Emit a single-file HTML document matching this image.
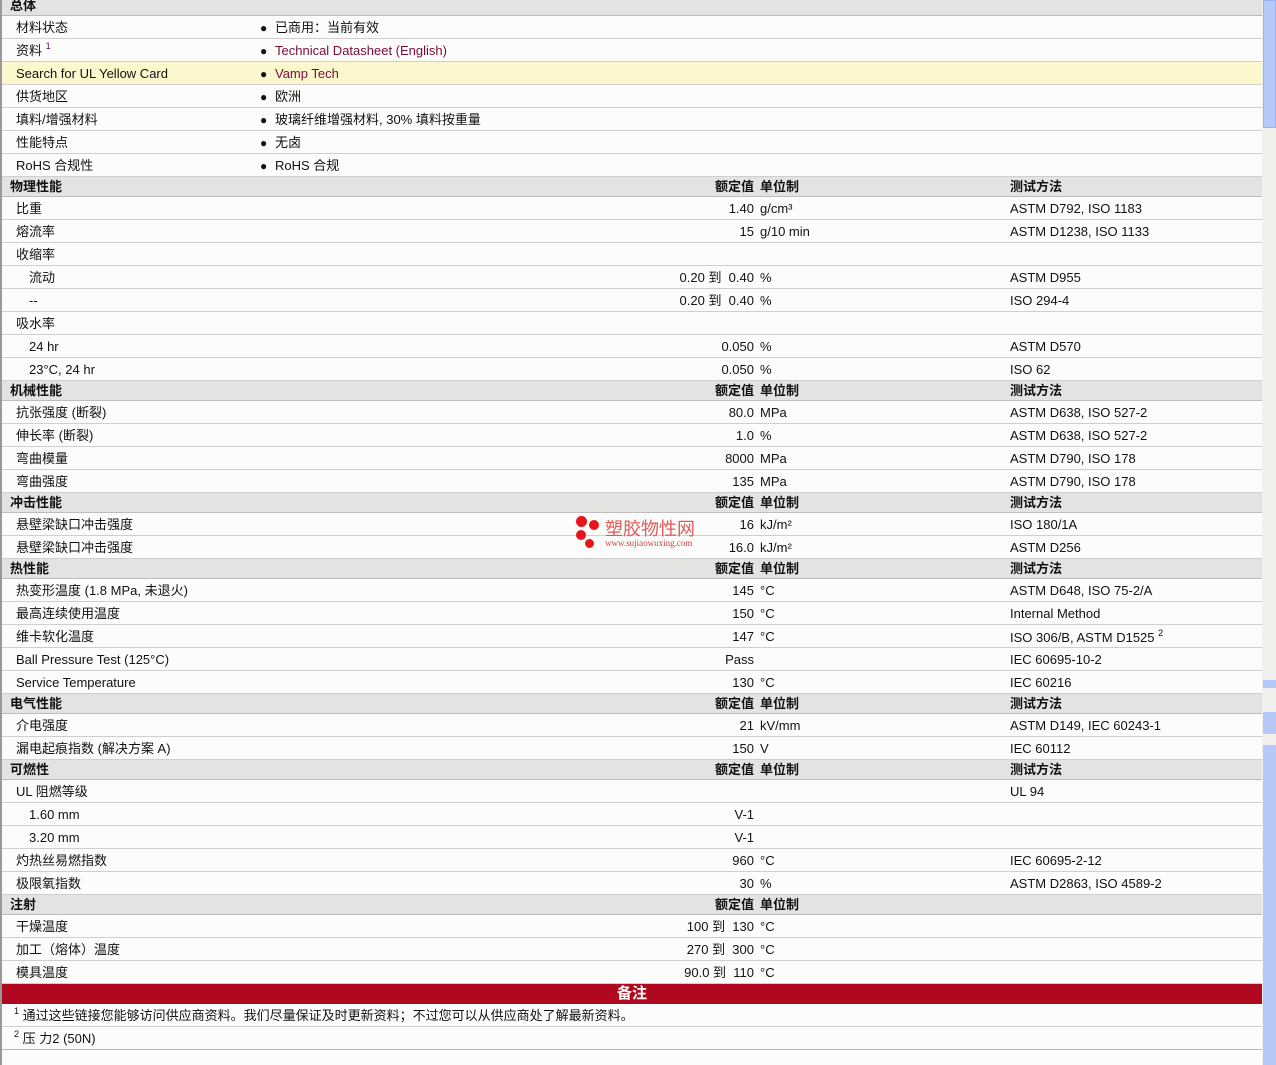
<!DOCTYPE html>
<html><head><meta charset="utf-8">
<style>
*{margin:0;padding:0;box-sizing:border-box}
body{width:1276px;height:1065px;overflow:hidden;background:#fcfdfa;font-family:"Liberation Sans","Noto Sans CJK SC",sans-serif;font-size:13px;color:#111;position:relative}
#wrap{position:absolute;left:0;top:0;width:1262px;border-left:2px solid #999;height:1065px}
.r{position:absolute;left:0;width:1260px;height:23px;border-bottom:1px solid #cfcfcf;line-height:24px}
.h{background:#e3e3e1;font-weight:bold;height:20px;line-height:20px;border-bottom:1px solid #bdbdbd}
.r span{position:absolute;top:0;white-space:nowrap}
.l{left:14px}.s{left:27px}
.b{left:258px;font-size:12px;font-weight:bold}
.v{left:273px}
.n{left:0;width:752px;text-align:right}
.u{left:758px}
.m{left:1008px}
.hl{left:8px}
.y{background:#fdf7cd}
a{color:#7a0a3a;text-decoration:none}
sup{font-size:9px;vertical-align:baseline;position:relative;top:-6px;line-height:0}
#sb{position:absolute;left:1262px;top:0;width:14px;height:1065px;background:#f1f0ec}
</style></head><body>
<div id="wrap">
<div class="r h" style="top:-4px"><span class="hl">总体</span></div>
<div class="r" style="top:16px"><span class="l">材料状态</span><span class="b">●</span><span class="v">已商用：当前有效</span></div>
<div class="r" style="top:39px"><span class="l">资料 <sup style="color:#5a0a70">1</sup></span><span class="b">●</span><span class="v"><a>Technical Datasheet (English)</a></span></div>
<div class="r y" style="top:62px"><span class="l">Search for UL Yellow Card</span><span class="b">●</span><span class="v"><a>Vamp Tech</a></span></div>
<div class="r" style="top:85px"><span class="l">供货地区</span><span class="b">●</span><span class="v">欧洲</span></div>
<div class="r" style="top:108px"><span class="l">填料/增强材料</span><span class="b">●</span><span class="v">玻璃纤维增强材料, 30% 填料按重量</span></div>
<div class="r" style="top:131px"><span class="l">性能特点</span><span class="b">●</span><span class="v">无卤</span></div>
<div class="r" style="top:154px"><span class="l">RoHS 合规性</span><span class="b">●</span><span class="v">RoHS 合规</span></div>

<div class="r h" style="top:177px"><span class="hl">物理性能</span><span class="n">额定值</span><span class="u">单位制</span><span class="m">测试方法</span></div>
<div class="r" style="top:197px"><span class="l">比重</span><span class="n">1.40</span><span class="u">g/cm³</span><span class="m">ASTM D792, ISO 1183</span></div>
<div class="r" style="top:220px"><span class="l">熔流率</span><span class="n">15</span><span class="u">g/10 min</span><span class="m">ASTM D1238, ISO 1133</span></div>
<div class="r" style="top:243px"><span class="l">收缩率</span></div>
<div class="r" style="top:266px"><span class="s">流动</span><span class="n">0.20&nbsp;到&nbsp;&nbsp;0.40</span><span class="u">%</span><span class="m">ASTM D955</span></div>
<div class="r" style="top:289px"><span class="s">--</span><span class="n">0.20&nbsp;到&nbsp;&nbsp;0.40</span><span class="u">%</span><span class="m">ISO 294-4</span></div>
<div class="r" style="top:312px"><span class="l">吸水率</span></div>
<div class="r" style="top:335px"><span class="s">24 hr</span><span class="n">0.050</span><span class="u">%</span><span class="m">ASTM D570</span></div>
<div class="r" style="top:358px"><span class="s">23°C, 24 hr</span><span class="n">0.050</span><span class="u">%</span><span class="m">ISO 62</span></div>

<div class="r h" style="top:381px"><span class="hl">机械性能</span><span class="n">额定值</span><span class="u">单位制</span><span class="m">测试方法</span></div>
<div class="r" style="top:401px"><span class="l">抗张强度 (断裂)</span><span class="n">80.0</span><span class="u">MPa</span><span class="m">ASTM D638, ISO 527-2</span></div>
<div class="r" style="top:424px"><span class="l">伸长率 (断裂)</span><span class="n">1.0</span><span class="u">%</span><span class="m">ASTM D638, ISO 527-2</span></div>
<div class="r" style="top:447px"><span class="l">弯曲模量</span><span class="n">8000</span><span class="u">MPa</span><span class="m">ASTM D790, ISO 178</span></div>
<div class="r" style="top:470px"><span class="l">弯曲强度</span><span class="n">135</span><span class="u">MPa</span><span class="m">ASTM D790, ISO 178</span></div>

<div class="r h" style="top:493px"><span class="hl">冲击性能</span><span class="n">额定值</span><span class="u">单位制</span><span class="m">测试方法</span></div>
<div class="r" style="top:513px"><span class="l">悬壁梁缺口冲击强度</span><span class="n">16</span><span class="u">kJ/m²</span><span class="m">ISO 180/1A</span></div>
<div class="r" style="top:536px"><span class="l">悬壁梁缺口冲击强度</span><span class="n">16.0</span><span class="u">kJ/m²</span><span class="m">ASTM D256</span></div>

<div class="r h" style="top:559px"><span class="hl">热性能</span><span class="n">额定值</span><span class="u">单位制</span><span class="m">测试方法</span></div>
<div class="r" style="top:579px"><span class="l">热变形温度 (1.8 MPa, 未退火)</span><span class="n">145</span><span class="u">°C</span><span class="m">ASTM D648, ISO 75-2/A</span></div>
<div class="r" style="top:602px"><span class="l">最高连续使用温度</span><span class="n">150</span><span class="u">°C</span><span class="m">Internal Method</span></div>
<div class="r" style="top:625px"><span class="l">维卡软化温度</span><span class="n">147</span><span class="u">°C</span><span class="m" style="top:1px">ISO 306/B, ASTM D1525 <sup>2</sup></span></div>
<div class="r" style="top:648px"><span class="l">Ball Pressure Test (125°C)</span><span class="n">Pass</span><span class="m">IEC 60695-10-2</span></div>
<div class="r" style="top:671px"><span class="l">Service Temperature</span><span class="n">130</span><span class="u">°C</span><span class="m">IEC 60216</span></div>

<div class="r h" style="top:694px"><span class="hl">电气性能</span><span class="n">额定值</span><span class="u">单位制</span><span class="m">测试方法</span></div>
<div class="r" style="top:714px"><span class="l">介电强度</span><span class="n">21</span><span class="u">kV/mm</span><span class="m">ASTM D149, IEC 60243-1</span></div>
<div class="r" style="top:737px"><span class="l">漏电起痕指数 (解决方案 A)</span><span class="n">150</span><span class="u">V</span><span class="m">IEC 60112</span></div>

<div class="r h" style="top:760px"><span class="hl">可燃性</span><span class="n">额定值</span><span class="u">单位制</span><span class="m">测试方法</span></div>
<div class="r" style="top:780px"><span class="l">UL 阻燃等级</span><span class="m">UL 94</span></div>
<div class="r" style="top:803px"><span class="s">1.60 mm</span><span class="n">V-1</span></div>
<div class="r" style="top:826px"><span class="s">3.20 mm</span><span class="n">V-1</span></div>
<div class="r" style="top:849px"><span class="l">灼热丝易燃指数</span><span class="n">960</span><span class="u">°C</span><span class="m">IEC 60695-2-12</span></div>
<div class="r" style="top:872px"><span class="l">极限氧指数</span><span class="n">30</span><span class="u">%</span><span class="m">ASTM D2863, ISO 4589-2</span></div>

<div class="r h" style="top:895px"><span class="hl">注射</span><span class="n">额定值</span><span class="u">单位制</span></div>
<div class="r" style="top:915px"><span class="l">干燥温度</span><span class="n">100&nbsp;到&nbsp;&nbsp;130</span><span class="u">°C</span></div>
<div class="r" style="top:938px"><span class="l">加工（熔体）温度</span><span class="n">270&nbsp;到&nbsp;&nbsp;300</span><span class="u">°C</span></div>
<div class="r" style="top:961px"><span class="l">模具温度</span><span class="n">90.0&nbsp;到&nbsp;&nbsp;110</span><span class="u">°C</span></div>

<div class="r" style="top:984px;height:20px;background:#b0081f;border:none;color:#fff;font-weight:bold;font-size:15px;line-height:19px;text-align:center">备注</div>
<div class="r" style="top:1004px"><span class="l" style="left:12px"><sup>1</sup> 通过这些链接您能够访问供应商资料。我们尽量保证及时更新资料；不过您可以从供应商处了解最新资料。</span></div>
<div class="r" style="top:1027px;border-bottom-color:#bbb"><span class="l" style="left:12px"><sup>2</sup> 压 力2 (50N)</span></div>
</div>

<div style="position:absolute;left:576px;top:516px;width:11px;height:11px;border-radius:50%;background:#e8141c"></div>
<div style="position:absolute;left:589px;top:520px;width:10px;height:10px;border-radius:50%;background:#e8141c"></div>
<div style="position:absolute;left:576px;top:530px;width:10px;height:10px;border-radius:50%;background:#e8141c"></div>
<div style="position:absolute;left:585px;top:539px;width:9px;height:9px;border-radius:50%;background:#e8141c"></div>
<div style="position:absolute;left:605px;top:518px;color:#e05a5a;font-size:18px;line-height:20px;font-family:'Noto Sans CJK SC',sans-serif">塑胶物性网</div>
<div style="position:absolute;left:605px;top:538px;color:#d04040;font-size:9px;line-height:10px;font-family:'Liberation Serif',serif">www.sujiaowuxing.com</div>

<div id="sb">
<div style="position:absolute;left:1px;top:0;width:13px;height:128px;background:#b6c8f7;border:1px solid #9db3ee"></div>
<div style="position:absolute;left:1px;top:680px;width:13px;height:8px;background:#b6c8f7"></div>
<div style="position:absolute;left:1px;top:712px;width:13px;height:22px;background:#b6c8f7"></div>
<div style="position:absolute;left:1px;top:745px;width:13px;height:320px;background:#b6c8f7"></div>
</div>
</body></html>
